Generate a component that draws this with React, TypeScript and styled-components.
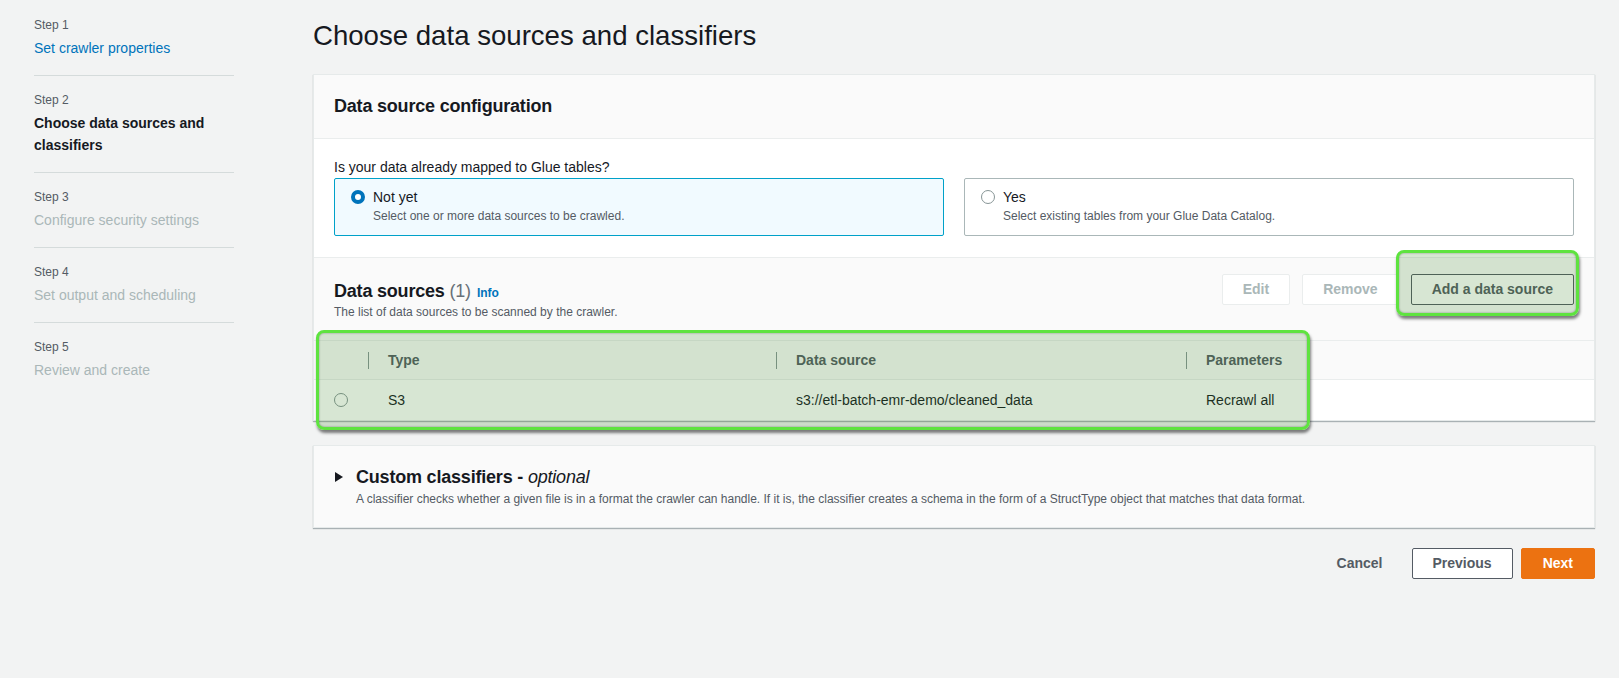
import React from "react";
import styled, { createGlobalStyle, css } from "styled-components";

const GlobalStyle = createGlobalStyle`
  html, body {
    margin: 0;
    padding: 0;
    background: #f2f3f3;
  }
  body {
    font-family: "Liberation Sans", Arial, sans-serif;
    color: #16191f;
    font-size: 14px;
    line-height: 22px;
  }
  * { box-sizing: border-box; }
`;

const Page = styled.div`
  display: grid;
  grid-template-columns: 200px 1fr;
  column-gap: 79px;
  padding: 0 24px 40px 34px;
  min-height: 678px;
`;

/* ---------- Side navigation ---------- */
const Nav = styled.nav`
  padding-top: 1px;
`;

const StepItem = styled.div<{ $last?: boolean }>`
  display: flex;
  flex-direction: column;
  gap: 4px;
  padding: 16px 0;
  border-bottom: ${(p) => (p.$last ? "none" : "1px solid #d5dbdb")};
`;

const StepLabel = styled.span`
  font-size: 12px;
  line-height: 16px;
  color: #545b64;
`;

type StepState = "link" | "active" | "disabled";

const StepTitle = styled.span<{ $state: StepState }>`
  font-size: 14px;
  line-height: 22px;
  ${(p) =>
    p.$state === "link"
      ? css`
          color: #0073bb;
        `
      : p.$state === "active"
      ? css`
          color: #16191f;
          font-weight: 700;
        `
      : css`
          color: #aab7b8;
        `}
`;

/* ---------- Main ---------- */
const Main = styled.main`
  padding-top: 18px;
  min-width: 0;
`;

const PageTitle = styled.h1`
  margin: 0 0 20px;
  font-size: 27.6px;
  line-height: 36px;
  font-weight: 400;
  color: #16191f;
`;

const Card = styled.section`
  background: #ffffff;
  border: 1px solid #e6eaea;
  box-shadow: 0 1px 1px 0 rgba(0, 28, 36, 0.3);
`;

const CardHeader = styled.div`
  background: #fafafa;
  padding: 20px 20px 21px;
  border-bottom: 1px solid #eaeded;
`;

const CardTitle = styled.h2`
  margin: 0;
  font-size: 18px;
  line-height: 22px;
  font-weight: 700;
  letter-spacing: -0.2px;
  color: #16191f;
`;

const ConfigSection = styled.div`
  padding: 17px 20px 21px;
  border-bottom: 1px solid #eaeded;
`;

const FieldLabel = styled.div`
  font-size: 14px;
  line-height: 22px;
  color: #16191f;
`;

const Tiles = styled.div`
  display: grid;
  grid-template-columns: 1fr 1fr;
  gap: 20px;
`;

const Tile = styled.label<{ $selected?: boolean }>`
  display: flex;
  align-items: flex-start;
  gap: 8px;
  padding: 7px 16px 11px;
  border-radius: 2px;
  border: 1px solid ${(p) => (p.$selected ? "#00a1c9" : "#aab7b8")};
  background: ${(p) => (p.$selected ? "#f1faff" : "#ffffff")};
`;

const Radio = styled.span<{ $checked?: boolean; $offset?: number }>`
  flex: none;
  display: inline-block;
  width: 14px;
  height: 14px;
  border-radius: 50%;
  margin-top: ${(p) => p.$offset ?? 0}px;
  background: #ffffff;
  border: ${(p) => (p.$checked ? "4px solid #0073bb" : "1px solid #879596")};
`;

const TileText = styled.div`
  display: flex;
  flex-direction: column;
`;

const TileTitle = styled.span`
  font-size: 14px;
  line-height: 22px;
  color: #16191f;
`;

const SmallText = styled.span`
  font-size: 12px;
  line-height: 16px;
  color: #545b64;
`;

/* ---------- Data sources ---------- */
const DataSection = styled.div`
  background: #fafafa;
`;

const DataHeader = styled.div`
  display: flex;
  justify-content: space-between;
  align-items: flex-start;
  padding: 16px 20px 20px;
`;

const TitleBlock = styled.div`
  display: flex;
  flex-direction: column;
  gap: 2px;
  padding-top: 6px;
`;

const Count = styled.span`
  font-weight: 400;
  color: #687078;
`;

const InfoLink = styled.a`
  margin-left: 6px;
  font-size: 12px;
  line-height: 12px;
  font-weight: 700;
  letter-spacing: 0;
  color: #0073bb;
  text-decoration: none;
`;

const Actions = styled.div`
  display: flex;
  align-items: center;
  gap: 12px;
`;

type ButtonVariant = "normal" | "disabled" | "primary" | "link";

const Button = styled.button<{ $variant: ButtonVariant }>`
  height: 31px;
  padding: 0 20px;
  border-radius: 2px;
  font-family: "Liberation Sans", Arial, sans-serif;
  font-size: 14px;
  font-weight: 700;
  line-height: 29px;
  white-space: nowrap;
  cursor: pointer;
  ${(p) =>
    p.$variant === "primary"
      ? css`
          background: #ec7211;
          border: 1px solid #ec7211;
          color: #ffffff;
          padding: 0 21px;
        `
      : p.$variant === "disabled"
      ? css`
          background: #ffffff;
          border: 1px solid #eaeded;
          color: #aab7b8;
          cursor: default;
        `
      : p.$variant === "link"
      ? css`
          background: transparent;
          border: 1px solid transparent;
          color: #545b64;
        `
      : css`
          background: #ffffff;
          border: 1px solid #545b64;
          color: #545b64;
        `}
`;

const Annotated = styled.div`
  position: relative;
  display: flex;
`;

const Highlight = styled.div`
  position: absolute;
  border: 3px solid #5ee33f;
  border-radius: 8px;
  background: rgba(55, 130, 35, 0.2);
  box-shadow: 1px 3px 3px rgba(0, 0, 0, 0.5), inset 0 0 2px rgba(0, 0, 0, 0.4);
  pointer-events: none;
`;

const ButtonHighlight = styled(Highlight)`
  left: -15px;
  top: -24px;
  width: 183px;
  height: 66px;
`;

const TableHighlight = styled(Highlight)`
  left: 2px;
  top: -10px;
  width: 994px;
  height: 100px;
`;

const Table = styled.div`
  position: relative;
`;

const cols = "54px 408px 410px 1fr";

const HeaderRow = styled.div`
  display: grid;
  grid-template-columns: ${cols};
  align-items: center;
  height: 40px;
  background: #fafafa;
  border-top: 1px solid #eaeded;
  border-bottom: 1px solid #eaeded;
`;

const HeaderCell = styled.div`
  font-size: 14px;
  font-weight: 700;
  color: #545b64;
`;

const HeaderLabel = styled.span`
  display: block;
  line-height: 17px;
  padding-left: 19px;
  border-left: 1px solid #879596;
`;

const BodyRow = styled.div`
  display: grid;
  grid-template-columns: ${cols};
  align-items: center;
  height: 40px;
  background: #ffffff;
`;

const RadioCell = styled.div`
  display: flex;
  justify-content: center;
`;

const Cell = styled.div`
  padding-left: 20px;
  font-size: 14px;
  line-height: 22px;
  color: #16191f;
`;

/* ---------- Custom classifiers ---------- */
const ExpandCard = styled.section`
  margin-top: 24px;
  background: #fafafa;
  border: 1px solid #e6eaea;
  box-shadow: 0 1px 1px 0 rgba(0, 28, 36, 0.3);
  padding: 20px;
`;

const ExpandHeading = styled.h2`
  margin: 0;
  display: flex;
  align-items: center;
  gap: 12px;
  font-size: 18px;
  line-height: 22px;
  font-weight: 700;
  letter-spacing: -0.2px;
  color: #16191f;
`;

const Optional = styled.em`
  font-weight: 400;
  font-style: italic;
`;

const ExpandDescription = styled.p`
  margin: 3px 0 0;
  padding-left: 22px;
  font-size: 12px;
  line-height: 16px;
  color: #545b64;
`;

const Footer = styled.div`
  display: flex;
  justify-content: flex-end;
  gap: 8px;
  margin-top: 20px;
`;

const Caret = () => (
  <svg width="10" height="10" viewBox="0 0 10 10" aria-hidden="true">
    <polygon points="1,0 9,5 1,10" fill="#16191f" />
  </svg>
);

const steps: { label: string; title: string; state: StepState }[] = [
  { label: "Step 1", title: "Set crawler properties", state: "link" },
  { label: "Step 2", title: "Choose data sources and classifiers", state: "active" },
  { label: "Step 3", title: "Configure security settings", state: "disabled" },
  { label: "Step 4", title: "Set output and scheduling", state: "disabled" },
  { label: "Step 5", title: "Review and create", state: "disabled" },
];

export default function App() {
  return (
    <>
      <GlobalStyle />
      <Page>
        <Nav>
          {steps.map((s, i) => (
            <StepItem key={s.label} $last={i === steps.length - 1}>
              <StepLabel>{s.label}</StepLabel>
              <StepTitle $state={s.state}>
                {s.state === "active" ? (
                  <>
                    Choose data sources and
                    <br />
                    classifiers
                  </>
                ) : (
                  s.title
                )}
              </StepTitle>
            </StepItem>
          ))}
        </Nav>

        <Main>
          <PageTitle>Choose data sources and classifiers</PageTitle>

          <Card>
            <CardHeader>
              <CardTitle>Data source configuration</CardTitle>
            </CardHeader>

            <ConfigSection>
              <FieldLabel>Is your data already mapped to Glue tables?</FieldLabel>
              <Tiles>
                <Tile $selected>
                  <Radio $checked $offset={4} />
                  <TileText>
                    <TileTitle>Not yet</TileTitle>
                    <SmallText>Select one or more data sources to be crawled.</SmallText>
                  </TileText>
                </Tile>
                <Tile>
                  <Radio $offset={4} />
                  <TileText>
                    <TileTitle>Yes</TileTitle>
                    <SmallText>Select existing tables from your Glue Data Catalog.</SmallText>
                  </TileText>
                </Tile>
              </Tiles>
            </ConfigSection>

            <DataSection>
              <DataHeader>
                <TitleBlock>
                  <CardTitle>
                    Data sources <Count>(1)</Count>
                    <InfoLink>Info</InfoLink>
                  </CardTitle>
                  <SmallText>The list of data sources to be scanned by the crawler.</SmallText>
                </TitleBlock>
                <Actions>
                  <Button $variant="disabled">Edit</Button>
                  <Button $variant="disabled">Remove</Button>
                  <Annotated>
                    <Button $variant="normal">Add a data source</Button>
                    <ButtonHighlight />
                  </Annotated>
                </Actions>
              </DataHeader>

              <Table>
                <HeaderRow>
                  <HeaderCell />
                  <HeaderCell>
                    <HeaderLabel>Type</HeaderLabel>
                  </HeaderCell>
                  <HeaderCell>
                    <HeaderLabel>Data source</HeaderLabel>
                  </HeaderCell>
                  <HeaderCell>
                    <HeaderLabel>Parameters</HeaderLabel>
                  </HeaderCell>
                </HeaderRow>
                <BodyRow>
                  <RadioCell>
                    <Radio />
                  </RadioCell>
                  <Cell>S3</Cell>
                  <Cell>s3://etl-batch-emr-demo/cleaned_data</Cell>
                  <Cell>Recrawl all</Cell>
                </BodyRow>
                <TableHighlight />
              </Table>
            </DataSection>
          </Card>

          <ExpandCard>
            <ExpandHeading>
              <Caret />
              <span>
                Custom classifiers - <Optional>optional</Optional>
              </span>
            </ExpandHeading>
            <ExpandDescription>
              A classifier checks whether a given file is in a format the crawler can handle. If it is,
              the classifier creates a schema in the form of a StructType object that matches that data
              format.
            </ExpandDescription>
          </ExpandCard>

          <Footer>
            <Button $variant="link">Cancel</Button>
            <Button $variant="normal">Previous</Button>
            <Button $variant="primary">Next</Button>
          </Footer>
        </Main>
      </Page>
    </>
  );
}
